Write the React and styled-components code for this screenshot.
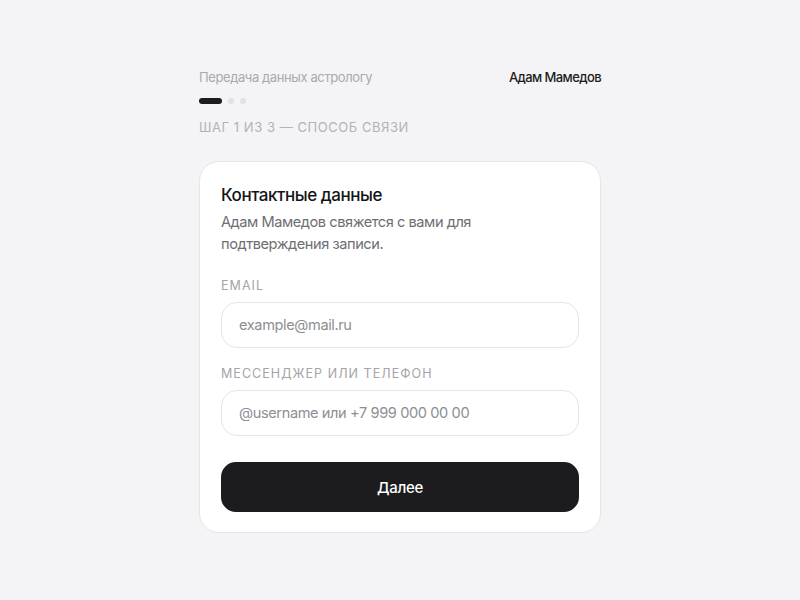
import React from "react";
import styled, { createGlobalStyle } from "styled-components";

const GlobalStyle = createGlobalStyle`
  html, body {
    margin: 0;
    padding: 0;
    background: #f4f4f6;
    font-family: Inter, "Noto Sans", sans-serif;
    -webkit-font-smoothing: antialiased;
  }
`;

const Page = styled.div`
  min-height: 600px;
  display: flex;
  justify-content: center;
  padding-top: 68px;
  box-sizing: border-box;
`;

const Column = styled.div`
  width: 402px;
  display: flex;
  flex-direction: column;
`;

const Header = styled.div`
  display: flex;
  justify-content: space-between;
  align-items: center;
  font-size: 13px;
  line-height: 18px;
  letter-spacing: -0.4px;
`;

const Context = styled.span`
  color: #a9a9ae;
`;

const Author = styled.span`
  color: #1c1c1e;
  font-weight: 500;
  letter-spacing: -0.6px;
`;

const Progress = styled.div`
  display: flex;
  gap: 6px;
  margin-top: 12px;
`;

const Dot = styled.span`
  height: 6px;
  width: ${(p) => (p.$active ? "23px" : "6px")};
  border-radius: 3px;
  background: ${(p) => (p.$active ? "#1c1c1e" : "#e2e2e5")};
`;

const StepLabel = styled.div`
  margin-top: 14px;
  font-size: 13px;
  line-height: 18px;
  letter-spacing: 0.55px;
  color: #b2b2b7;
  text-transform: uppercase;
`;

const Card = styled.div`
  margin-top: 25px;
  background: #ffffff;
  border: 1px solid #e6e6e9;
  border-radius: 20px;
  padding: 21px 21px 20px 21px;
  display: flex;
  flex-direction: column;
`;

const Title = styled.h2`
  margin: 0;
  font-size: 17px;
  line-height: 24px;
  font-weight: 500;
  letter-spacing: -0.45px;
  color: #141416;
`;

const Description = styled.p`
  margin: 4px 0 0;
  font-size: 14.6px;
  line-height: 22px;
  letter-spacing: -0.45px;
  color: #6e6e73;
  max-width: 280px;
`;

const Field = styled.label`
  display: flex;
  flex-direction: column;
  margin-top: ${(p) => p.$top || "18px"};
`;

const FieldLabel = styled.span`
  font-size: 12.5px;
  line-height: 16px;
  letter-spacing: 1.05px;
  color: #a4a4a9;
  text-transform: uppercase;
`;

const Input = styled.input`
  margin-top: 8px;
  height: 46px;
  box-sizing: border-box;
  border: 1px solid #e6e6e9;
  border-radius: 16px;
  padding: 0 17px;
  font-family: inherit;
  font-size: 14.6px;
  letter-spacing: -0.4px;
  color: #1c1c1e;
  background: #fff;
  outline: none;

  &::placeholder {
    color: #8e8e93;
  }
`;

const Button = styled.button`
  margin-top: 26px;
  height: 50px;
  border: none;
  border-radius: 15px;
  background: #1c1c1e;
  color: #ffffff;
  font-family: inherit;
  font-size: 15px;
  font-weight: 500;
  letter-spacing: -0.3px;
  cursor: pointer;
`;

export default function App() {
  return (
    <>
      <GlobalStyle />
      <Page>
        <Column>
          <Header>
            <Context>Передача данных астрологу</Context>
            <Author>Адам Мамедов</Author>
          </Header>
          <Progress>
            <Dot $active />
            <Dot />
            <Dot />
          </Progress>
          <StepLabel>Шаг 1 из 3 — способ связи</StepLabel>
          <Card>
            <Title>Контактные данные</Title>
            <Description>
              Адам Мамедов свяжется с вами для подтверждения записи.
            </Description>
            <Field $top="23px">
              <FieldLabel>Email</FieldLabel>
              <Input type="email" placeholder="example@mail.ru" />
            </Field>
            <Field>
              <FieldLabel>Мессенджер или телефон</FieldLabel>
              <Input type="text" placeholder="@username или +7 999 000 00 00" />
            </Field>
            <Button type="button">Далее</Button>
          </Card>
        </Column>
      </Page>
    </>
  );
}
